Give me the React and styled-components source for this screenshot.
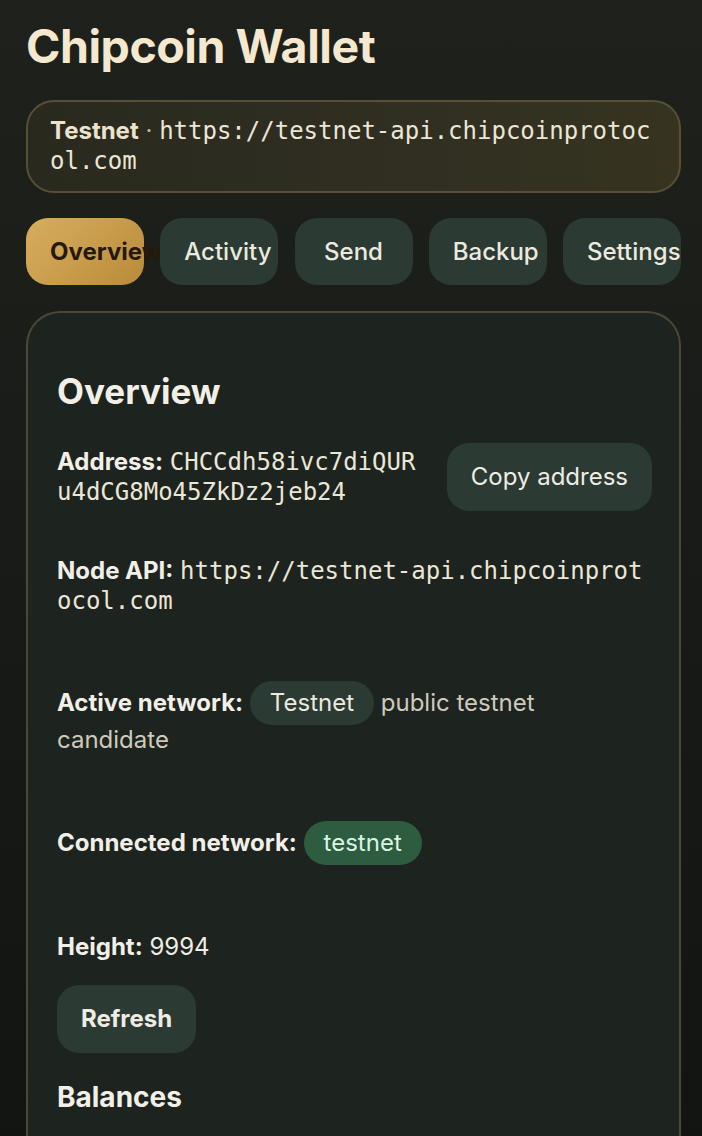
import React from "react";
import styled, { createGlobalStyle } from "styled-components";

const Global = createGlobalStyle`
  html, body { margin: 0; padding: 0; }
  body {
    background: linear-gradient(180deg, #1f211c 0%, #181b17 45%, #111411 100%);
    min-height: 100vh;
    font-family: Inter, "Noto Sans", sans-serif;
    color: #efece4;
    -webkit-font-smoothing: antialiased;
  }
`;

const Page = styled.main`
  padding: 19px 21px 0 26px;
  min-height: 1136px;
  box-sizing: border-box;
`;

const Title = styled.h1`
  margin: 0;
  font-size: 46.5px;
  line-height: 1.2;
  font-weight: 700;
  letter-spacing: -0.01em;
  color: #f5e8cf;
`;

const NetBanner = styled.div`
  margin-top: 25px;
  border: 2px solid #584f36;
  border-radius: 28px;
  background: linear-gradient(90deg, #2a291f 0%, #312f22 60%, #36331f 100%);
  padding: 14px 22px;
  font-size: 24px;
  line-height: 30.5px;
  color: #ece3cd;
  word-break: break-all;
`;

const Strong = styled.strong`
  font-weight: 700;
  word-break: normal;
`;

const Dot = styled.span`
  color: #b9b19a;
`;

const Mono = styled.span`
  font-family: "DejaVu Sans Mono", "Liberation Mono", monospace;
  font-size: 24px;
  word-break: break-all;
  color: ${(p) => p.$color || "#ece6d6"};
`;

const Tabs = styled.nav`
  margin-top: 25px;
  display: grid;
  grid-template-columns: repeat(5, 1fr);
  gap: 16.25px;
`;

const Tab = styled.button`
  display: block;
  height: 67px;
  padding: 0 24px;
  border: none;
  border-radius: 22px;
  font-family: Inter, sans-serif;
  font-size: 24px;
  text-align: center;
  white-space: nowrap;
  overflow: visible;
  min-width: 0;
  font-weight: ${(p) => (p.$active ? 700 : 500)};
  color: ${(p) => (p.$active ? "#25190b" : "#ece9df")};
  background: ${(p) =>
    p.$active
      ? "linear-gradient(135deg, #d6ad5e 0%, #c99d4c 50%, #b98a39 100%)"
      : "#2b3a32"};
`;

const Card = styled.section`
  margin-top: 26px;
  border: 2px solid #4a4837;
  border-bottom: none;
  border-radius: 34px 34px 0 0;
  background: #1d231f;
  padding: 29px 27px 60px 29px;
  display: flex;
  flex-direction: column;
`;

const Heading = styled.h2`
  margin: 28px 0 0;
  font-size: 35px;
  line-height: 1.2;
  font-weight: 700;
  color: #f2efe7;
`;

const SubHeading = styled.h3`
  margin: 28px 0 0;
  font-size: 28px;
  line-height: 1.2;
  font-weight: 700;
  color: #f2efe7;
`;

const AddressRow = styled.div`
  margin-top: 31px;
  display: flex;
  align-items: center;
  gap: 24px;
`;

const Field = styled.div`
  margin-top: ${(p) => p.$space || 0}px;
  font-size: 24px;
  line-height: 30px;
  color: #efece4;
  ${(p) => (p.$grow ? "flex: 1; min-width: 0;" : "")}
`;

const Label = styled.strong`
  font-weight: 700;
  color: #f2efe7;
`;

const Muted = styled.span`
  color: #cfcabc;
`;

const Pill = styled.span`
  display: inline-block;
  padding: 7px 20px;
  border-radius: 22px;
  line-height: 30px;
  background: ${(p) => (p.$tone === "green" ? "#2d5c40" : "#2b3a32")};
  color: ${(p) => (p.$tone === "green" ? "#d9f5e2" : "#ece9df")};
`;

const Button = styled.button`
  flex: none;
  height: 68px;
  padding: 0 24px;
  border: none;
  border-radius: 22px;
  background: #2b3a32;
  color: #efece4;
  font-family: Inter, sans-serif;
  font-size: 24px;
  font-weight: ${(p) => (p.$bold ? 700 : 400)};
  align-self: ${(p) => (p.$start ? "flex-start" : "auto")};
  margin-top: ${(p) => p.$space || 0}px;
`;

export default function App() {
  const tabs = ["Overview", "Activity", "Send", "Backup", "Settings"];
  return (
    <>
      <Global />
      <Page>
        <Title>Chipcoin Wallet</Title>
        <NetBanner>
          <Strong>Testnet</Strong>
          <Dot> · </Dot>
          <Mono>https://testnet-api.chipcoinprotocol.com</Mono>
        </NetBanner>
        <Tabs>
          {tabs.map((t, i) => (
            <Tab key={t} $active={i === 0}>
              {t}
            </Tab>
          ))}
        </Tabs>
        <Card>
          <Heading>Overview</Heading>
          <AddressRow>
            <Field $grow>
              <Label>Address:</Label>{" "}
              <Mono>CHCCdh58ivc7diQURu4dCG8Mo45ZkDz2jeb24</Mono>
            </Field>
            <Button>Copy address</Button>
          </AddressRow>
          <Field $space={45}>
            <Label>Node API:</Label>{" "}
            <Mono>https://testnet-api.chipcoinprotocol.com</Mono>
          </Field>
          <Field $space={65}>
            <Label>Active network:</Label> <Pill>Testnet</Pill>{" "}
            <Muted>public testnet candidate</Muted>
          </Field>
          <Field $space={66}>
            <Label>Connected network:</Label> <Pill $tone="green">testnet</Pill>
          </Field>
          <Field $space={67}>
            <Label>Height:</Label> 9994
          </Field>
          <Button $bold $start $space={23}>
            Refresh
          </Button>
          <SubHeading>Balances</SubHeading>
        </Card>
      </Page>
    </>
  );
}
